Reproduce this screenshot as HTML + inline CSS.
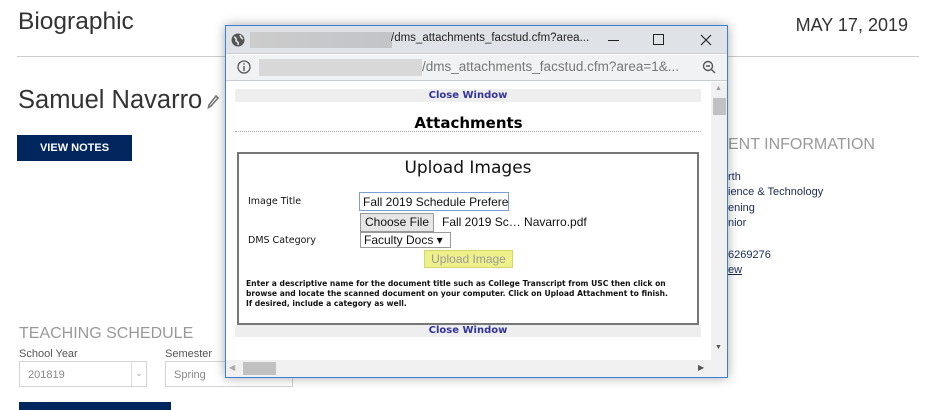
<!DOCTYPE html>
<html><head><meta charset="utf-8"><style>
*{margin:0;padding:0;box-sizing:border-box}
body{width:936px;height:410px;overflow:hidden;background:#fff;font-family:"Liberation Sans",Arial,sans-serif;position:relative}
.a{position:absolute;white-space:nowrap}
.info{font-size:11px;color:#1a2a55;left:728px}
.sel{position:absolute;border:1px solid #d4d4d4;height:26px;top:361px;font-size:11px;color:#888;padding:7px 0 0 8px}
</style></head><body>
<div class="a" style="left:18px;top:8px;font-size:24.5px;color:#333">Biographic</div>
<div class="a" style="right:28px;top:15px;font-size:18px;color:#333">MAY 17, 2019</div>
<div class="a" style="left:17px;top:56px;width:902px;height:1px;background:#ccc"></div>
<div class="a" style="left:18px;top:86px;font-size:25.5px;color:#333">Samuel Navarro</div>
<svg class="a" style="left:207px;top:95px" width="12" height="14" viewBox="0 0 12 14"><path d="M9 1 L11 3 L4 11 L1.5 12.5 L2 10 Z" fill="none" stroke="#777" stroke-width="1.6"/></svg>
<div class="a" style="left:17px;top:135px;width:115px;height:26px;background:#00265e;color:#fff;font-size:11px;font-weight:bold;text-align:center;line-height:26px">VIEW NOTES</div>
<div class="a" style="left:728px;top:136px;font-size:16px;color:#999">ENT INFORMATION</div>
<div class="a info" style="top:171px">rth</div>
<div class="a info" style="top:186px">ience &amp; Technology</div>
<div class="a info" style="top:202px">ening</div>
<div class="a info" style="top:217px">nior</div>
<div class="a info" style="top:249px">6269276</div>
<div class="a info" style="top:264px;text-decoration:underline">ew</div>
<div class="a" style="left:19px;top:325px;font-size:16px;color:#999">TEACHING SCHEDULE</div>
<div class="a" style="left:19px;top:348px;font-size:11px;color:#555">School Year</div>
<div class="a" style="left:165px;top:348px;font-size:11px;color:#555">Semester</div>
<div class="sel" style="left:19px;width:128px">201819<span style="position:absolute;right:0;top:0;width:15px;height:24px;border-left:1px solid #ddd;text-align:center;padding-top:6px;color:#aaa;font-size:9px">⌄</span></div>
<div class="sel" style="left:165px;width:128px">Spring</div>
<div class="a" style="left:19px;top:402px;width:152px;height:8px;background:#00265e"></div>

<div class="a" style="left:225px;top:25px;width:503px;height:353px;border:1px solid #3b82d6;background:#fff;box-shadow:0 0 10px rgba(0,0,0,.35);overflow:hidden">
 <div class="a" style="left:0;top:0;width:502px;height:28px;background:#dfe2e6;border-bottom:1px solid #c8cbd0"></div>
 <svg class="a" style="left:5px;top:7px" width="14" height="14"><circle cx="7" cy="7" r="6.5" fill="#555"/><path d="M3 4 Q6 5 5 8 Q8 9 7 12 M9 2 Q10 5 12 6" stroke="#dfe2e6" stroke-width="1.6" fill="none"/></svg>
 <div class="a" style="left:24px;top:6px;width:142px;height:16px;background:linear-gradient(90deg,#ccc,#c2c4c8)"></div>
 <div class="a" style="left:165px;top:6px;font-size:11.5px;color:#222">/dms_attachments_facstud.cfm?area...</div>
 <div class="a" style="left:382px;top:14px;width:11px;height:1px;background:#222"></div>
 <div class="a" style="left:427px;top:8px;width:11px;height:11px;border:1px solid #222"></div>
 <svg class="a" style="left:474px;top:8px" width="12" height="12"><path d="M1 1 L11 11 M11 1 L1 11" stroke="#222" stroke-width="1.1"/></svg>
 <div class="a" style="left:0;top:29px;width:502px;height:26px;background:#f1f2f4;border-bottom:1px solid #c8cbd0"></div>
 <svg class="a" style="left:11px;top:34px" width="14" height="14"><circle cx="7" cy="7" r="6" fill="none" stroke="#555" stroke-width="1.3"/><rect x="6.3" y="6" width="1.4" height="5" fill="#555"/><rect x="6.3" y="3.2" width="1.4" height="1.5" fill="#555"/></svg>
 <div class="a" style="left:33px;top:33px;width:163px;height:17px;background:#d8d8d8"></div>
 <div class="a" style="left:196px;top:33px;font-size:13.5px;color:#777">/dms_attachments_facstud.cfm?area=1&amp;...</div>
 <svg class="a" style="left:476px;top:34px" width="15" height="15"><circle cx="6" cy="6" r="4.5" fill="none" stroke="#555" stroke-width="1.4"/><path d="M9.5 9.5 L13 13 M4 6 H8" stroke="#555" stroke-width="1.4"/></svg>
 <div class="a" style="left:485px;top:56px;width:17px;height:279px;background:#f0f0f0"></div>
 <div class="a" style="left:487px;top:72px;width:13px;height:17px;background:#c1c1c1"></div>
 <div class="a" style="left:489px;top:59px;font-size:7px;color:#999">▲</div>
 <div class="a" style="left:489px;top:318px;font-size:7px;color:#555">▼</div>
 <div class="a" style="left:9px;top:63px;width:466px;height:13px;background:#eee;text-align:center;font-size:10px;font-weight:bold;color:#333399;line-height:13px;font-family:'DejaVu Sans',sans-serif">Close Window</div>
 <div class="a" style="left:0;width:485px;top:88px;text-align:center;font-size:15px;font-weight:bold;color:#000;font-family:'DejaVu Sans',sans-serif">Attachments</div>
 <div class="a" style="left:9px;top:105px;width:466px;border-top:1px dotted #aaa"></div>
 <div class="a" style="left:11px;top:126px;width:462px;height:173px;border:2px solid #777"></div>
 <div class="a" style="left:11px;width:462px;top:132px;text-align:center;font-size:17px;color:#111;font-family:'DejaVu Sans',sans-serif">Upload Images</div>
 <div class="a" style="left:22px;top:170px;font-size:9.5px;color:#111;font-family:'DejaVu Sans',sans-serif">Image Title</div>
 <div class="a" style="left:133px;top:166px;width:150px;height:19px;border:1px solid #7a9fd6;font-size:12px;padding:2px 3px;color:#111;overflow:hidden">Fall 2019 Schedule Prefere</div>
 <div class="a" style="left:134px;top:187px;width:74px;height:19px;border:1px solid #999;background:#e5e5e5;font-size:12px;text-align:center;line-height:17px;color:#111">Choose File</div>
 <div class="a" style="left:216px;top:189px;font-size:12px;color:#111">Fall 2019 Sc… Navarro.pdf</div>
 <div class="a" style="left:22px;top:209px;font-size:9.5px;color:#111;font-family:'DejaVu Sans',sans-serif">DMS Category</div>
 <div class="a" style="left:134px;top:206px;width:91px;height:16px;border:1px solid #999;font-size:12px;line-height:14px;padding-left:3px;color:#111">Faculty Docs ▾</div>
 <div class="a" style="left:198px;top:224px;width:89px;height:18px;border:1px solid #d6d66a;background:#eef08a;font-size:12px;text-align:center;line-height:16px;color:#999">Upload Image</div>
 <div class="a" style="left:20px;top:253px;font-size:7.6px;font-weight:bold;color:#111;line-height:10px;font-family:'DejaVu Sans',sans-serif">Enter a descriptive name for the document title such as College Transcript from USC then click on<br>browse and locate the scanned document on your computer. Click on Upload Attachment to finish.<br>If desired, include a category as well.</div>
 <div class="a" style="left:9px;top:299px;width:466px;height:12px;background:#eee;text-align:center;font-size:10px;font-weight:bold;color:#333399;line-height:12px;font-family:'DejaVu Sans',sans-serif">Close Window</div>
 <div class="a" style="left:0;top:334px;width:502px;height:17px;background:#f0f0f0"></div>
 <div class="a" style="left:17px;top:336px;width:33px;height:13px;background:#c1c1c1"></div>
 <div class="a" style="left:3px;top:337px;font-size:8px;color:#aaa">◀</div>
 <div class="a" style="left:472px;top:337px;font-size:8px;color:#555">▶</div>
</div>
</body></html>
